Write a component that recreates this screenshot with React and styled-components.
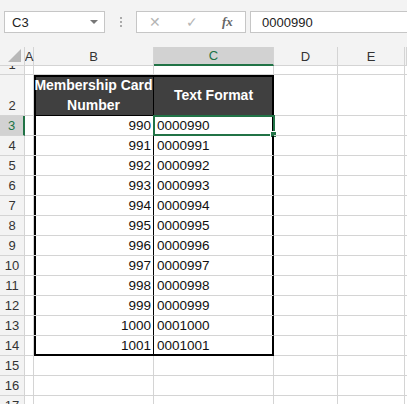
import React from 'react';
import styled, { createGlobalStyle, css } from 'styled-components';

const Global = createGlobalStyle`
  body { margin: 0; background: #fff; font-family: "Liberation Sans", Arial, sans-serif; }
`;

const Page = styled.div`
  width: 407px;
  height: 404px;
  overflow: hidden;
  background: #fff;
`;

const Toolbar = styled.div`
  height: 47px;
  background: #f3f3f3;
  display: flex;
  align-items: center;
  padding: 0 0 3px 4px;
  box-sizing: border-box;
`;

const NameBox = styled.div`
  width: 101px;
  height: 22px;
  background: #fff;
  border: 1px solid #c6c6c6;
  box-sizing: border-box;
  display: flex;
  align-items: center;
  justify-content: space-between;
  padding: 0 6px 0 7px;
  font-size: 13px;
  color: #222;
`;

const Caret = styled.span`
  width: 0;
  height: 0;
  border-left: 4px solid transparent;
  border-right: 4px solid transparent;
  border-top: 4px solid #777;
`;

const Dots = styled.div`
  width: 31px;
  display: flex;
  flex-direction: column;
  align-items: center;
  gap: 2px;
  span { width: 2px; height: 2px; background: #aaa; }
`;

const ButtonBox = styled.div`
  width: 110px;
  height: 22px;
  background: #fff;
  border: 1px solid #c6c6c6;
  box-sizing: border-box;
  display: flex;
  align-items: center;
  justify-content: space-around;
  color: #b5b5b5;
  font-size: 14px;
`;

const Fx = styled.span`
  font-family: "Liberation Serif", serif;
  font-style: italic;
  font-weight: bold;
  color: #666;
  font-size: 13px;
`;

const FormulaInput = styled.div`
  flex: 1;
  margin-left: 4px;
  height: 22px;
  background: #fff;
  border: 1px solid #c6c6c6;
  border-right: none;
  box-sizing: border-box;
  display: flex;
  align-items: center;
  padding-left: 11px;
  font-size: 13px;
  color: #222;
`;

const Sheet = styled.div`
  display: grid;
  grid-template-columns: 25px 9px 120px 120px 64px 67px 2px;
  grid-template-rows: 19px 9px 41px repeat(15, 20px);
`;

const Corner = styled.div`
  background: #f3f3f3;
  border-right: 1px solid #d4d4d4;
  border-bottom: 1px solid #d4d4d4;
  position: relative;
  &::after {
    content: '';
    position: absolute;
    right: 3px;
    bottom: 3px;
    border-left: 13px solid transparent;
    border-bottom: 13px solid #b8b8b8;
  }
`;

const ColHead = styled.div`
  background: ${p => (p.$active ? '#d2d2d2' : '#f3f3f3')};
  border-right: 1px solid #d4d4d4;
  border-bottom: ${p => (p.$active ? '2px solid #217346' : '1px solid #d4d4d4')};
  color: ${p => (p.$active ? '#217346' : '#333')};
  font-size: 13px;
  display: flex;
  align-items: center;
  justify-content: center;
  box-sizing: border-box;
`;

const RowHead = styled.div`
  background: ${p => (p.$active ? '#d2d2d2' : '#f3f3f3')};
  border-right: ${p => (p.$active ? '2px solid #217346' : '1px solid #d4d4d4')};
  border-bottom: 1px solid #d4d4d4;
  color: ${p => (p.$active ? '#217346' : '#333')};
  font-size: 13px;
  display: flex;
  align-items: flex-end;
  justify-content: center;
  padding-bottom: 1px;
  box-sizing: border-box;
  overflow: hidden;
  line-height: 16px;
`;

const Cell = styled.div`
  border-right: 1px solid ${p => (p.$sep ? '#000' : '#d4d4d4')};
  border-bottom: 1px solid #d4d4d4;
  box-sizing: border-box;
  font-size: 13.5px;
  color: #111;
  display: flex;
  align-items: flex-end;
  justify-content: ${p => (p.$right ? 'flex-end' : 'flex-start')};
  padding: 0 2px 1px 3px;
  line-height: 17px;
  position: relative;
  box-shadow: inset ${p => (p.$l ? '2px' : '0')} ${p => (p.$t ? '2px' : '0')} 0 #000,
    inset ${p => (p.$r ? '-1px' : '0')} ${p => (p.$b ? '-1px' : '0')} 0 #000;
  ${p => p.$b && css`border-bottom-color: #000;`}
  ${p => p.$r && css`border-right-color: #000;`}
  ${p => p.$head && css`
    background: #404040;
    color: #fff;
    font-weight: bold;
    font-size: 14px;
    justify-content: center;
    align-items: center;
    text-align: center;
    line-height: 20px;
    padding: 0;
    border-bottom-color: #000;
  `}
`;

const Selection = styled.div`
  position: absolute;
  inset: -1px -2px -1px -1px;
  border: 2px solid #217346;
  pointer-events: none;
  &::after {
    content: '';
    position: absolute;
    right: -4px;
    bottom: -4px;
    width: 5px;
    height: 5px;
    background: #217346;
    border: 1px solid #fff;
  }
`;

const cols = ['A', 'B', 'C', 'D', 'E'];
const data = [];
for (let n = 990; n <= 1001; n++) data.push(n);

export default function App() {
  const rows = [];
  rows.push(
    <React.Fragment key="r1">
      <RowHead>1</RowHead>
      <Cell /><Cell /><Cell /><Cell /><Cell /><Cell />
    </React.Fragment>
  );
  rows.push(
    <React.Fragment key="r2">
      <RowHead>2</RowHead>
      <Cell />
      <Cell $head $sep $l $t>Membership Card<br />Number</Cell>
      <Cell $head $t $r>Text Format</Cell>
      <Cell /><Cell /><Cell />
    </React.Fragment>
  );
  data.forEach((n, i) => {
    const last = i === data.length - 1;
    rows.push(
      <React.Fragment key={n}>
        <RowHead $active={i === 0}>{i + 3}</RowHead>
        <Cell />
        <Cell $right $sep $l $b={last}>{n}</Cell>
        <Cell $r $b={last}>
          {String(n).padStart(7, '0')}
          {i === 0 && <Selection />}
        </Cell>
        <Cell /><Cell /><Cell />
      </React.Fragment>
    );
  });
  [15, 16, 17].forEach(r => {
    rows.push(
      <React.Fragment key={r}>
        <RowHead>{r}</RowHead>
        <Cell /><Cell /><Cell /><Cell /><Cell /><Cell />
      </React.Fragment>
    );
  });

  return (
    <Page>
      <Global />
      <Toolbar>
        <NameBox>C3<Caret /></NameBox>
        <Dots><span /><span /><span /></Dots>
        <ButtonBox>
          <span>✕</span>
          <span>✓</span>
          <Fx>fx</Fx>
        </ButtonBox>
        <FormulaInput>0000990</FormulaInput>
      </Toolbar>
      <Sheet>
        <Corner />
        {cols.map(c => <ColHead key={c} $active={c === 'C'}>{c}</ColHead>)}
        <ColHead />
        {rows}
      </Sheet>
    </Page>
  );
}
